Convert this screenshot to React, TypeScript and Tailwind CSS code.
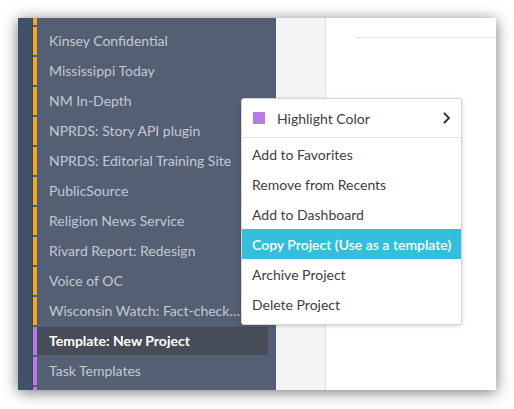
const PROJECTS = [
  { name: "", color: "orange" },
  { name: "Kinsey Confidential", color: "orange" },
  { name: "Mississippi Today", color: "orange" },
  { name: "NM In-Depth", color: "orange" },
  { name: "NPRDS: Story API plugin", color: "orange" },
  { name: "NPRDS: Editorial Training Site", color: "orange" },
  { name: "PublicSource", color: "orange" },
  { name: "Religion News Service", color: "orange" },
  { name: "Rivard Report: Redesign", color: "orange" },
  { name: "Voice of OC", color: "orange" },
  { name: "Wisconsin Watch: Fact-checking Guide", color: "orange" },
  { name: "Template: New Project", color: "purple", active: true },
  { name: "Task Templates", color: "purple" },
  { name: "", color: "purple" },
];

const MENU_ITEMS = [
  "Add to Favorites",
  "Remove from Recents",
  "Add to Dashboard",
  "Copy Project (Use as a template)",
  "Archive Project",
  "Delete Project",
];

function ContextMenu() {
  return (
    <div className="absolute left-[223px] top-[80px] w-[221px] rounded-[3px] border border-[#d4d6da] bg-white pb-[5px] shadow-[0_1px_4px_rgba(0,0,0,0.18)]">
      {/* Highlight color row */}
      <div className="flex h-[39px] items-center border-b border-[#e2e3e6] pl-[11px] pr-[10px] text-[#3b3e47]">
        <span className="h-[12px] w-[12px] bg-[#b77be6]" />
        <span className="ml-[12px] flex-1 text-[14px]">Highlight Color</span>
        <svg width="10" height="14" viewBox="0 0 10 14" fill="none">
          <polyline points="3,2 8,7 3,12" stroke="#2b2d33" strokeWidth="1.8" />
        </svg>
      </div>
      <div className="pt-px">
        {MENU_ITEMS.map((item) => {
          const hl = item.startsWith("Copy");
          return (
            <div
              key={item}
              className={`flex h-[30px] items-center whitespace-nowrap px-[10px] text-[14px] ${
                hl ? "bg-[#35bddc] font-semibold text-white" : "text-[#3b3e47]"
              }`}
            >
              {item}
            </div>
          );
        })}
      </div>
    </div>
  );
}

export default function App() {
  return (
    <div className="min-h-screen bg-white p-[18px] font-['Lato',sans-serif]">
      <div className="relative flex h-[372px] w-[478px] overflow-hidden shadow-[0_2px_14px_rgba(0,0,0,0.55)]">
        {/* Left narrow strip */}
        <div className="w-[15px] shrink-0 border-r border-[#3d4556] bg-[#405267]" />

        {/* Project sidebar */}
        <div className="w-[243px] shrink-0 overflow-hidden bg-[#555f73]">
          <div className="-mt-[22px]">
            {PROJECTS.map((p, i) => (
              <div key={i} className="h-[30px] py-px">
                <div className="flex h-full w-[235px]">
                  <div
                    className={`w-[4px] shrink-0 ${
                      p.color === "orange" ? "bg-[#f5a623]" : "bg-[#b77be6]"
                    }`}
                  />
                  <div
                    className={`flex min-w-0 flex-1 items-center pb-[2px] pl-[12px] pr-[28px] text-[14px] ${
                      p.active
                        ? "bg-[#474c59] font-bold text-white"
                        : "text-[#c3c9d4]"
                    }`}
                  >
                    <span className="truncate">{p.name}</span>
                  </div>
                </div>
              </div>
            ))}
          </div>
        </div>

        {/* Secondary column */}
        <div className="w-[50px] shrink-0 border-r border-[#dfe0e2] bg-[#f4f4f5]" />

        {/* Main content */}
        <div className="flex-1 bg-white pl-[29px] pt-[19px]">
          <div className="border-t border-[#e4e5e7]" />
        </div>

        <ContextMenu />
      </div>
    </div>
  );
}
